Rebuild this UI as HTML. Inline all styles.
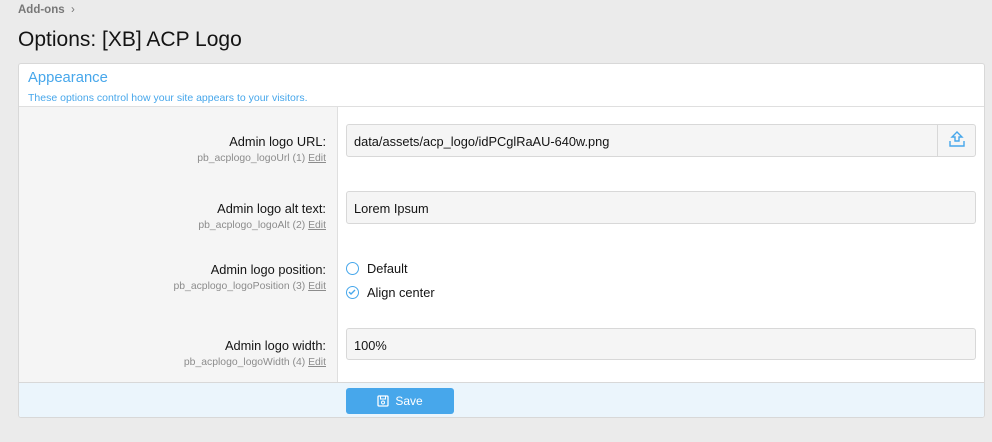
<!DOCTYPE html><html><head><style>
*{box-sizing:border-box}body{margin:0;width:992px;height:442px;background:#ebebeb;font-family:"Liberation Sans",sans-serif;color:#141414;position:relative;overflow:hidden}
.a{position:absolute}
.crumb{left:18px;top:4px;font-size:11.5px;font-weight:bold;color:#777}
h1{position:absolute;left:18px;top:28px;margin:0;font-weight:normal;font-size:21px;color:#141414}
.blk{left:18px;top:63px;width:967px;height:355px;background:#fff;border:1px solid #d8d8d8;border-radius:3px;overflow:hidden}
.hd{position:absolute;left:0;top:0;width:100%;height:43px;border-bottom:1px solid #dfdfdf}
.hd .t{position:absolute;left:9px;top:6px;font-size:14.8px;color:#47a7eb}
.hd .s{position:absolute;left:9px;top:28px;font-size:10.5px;color:#47a7eb}
.lc{position:absolute;left:0;top:43px;width:319px;height:276px;background:#f5f5f5;border-right:1px solid #dfdfdf}
.ft{position:absolute;left:0;top:318px;width:100%;height:37px;background:#ebf5fc;border-top:1px solid #d8d8d8}
.lb{position:absolute;right:658px;text-align:right;font-size:12.8px;white-space:nowrap}
.hint{display:block;font-size:10.4px;color:#8c8c8c;margin-top:4px}
.hint u{color:#8c8c8c}
.in{position:absolute;left:327px;width:630px;height:33px;background:#f5f5f5;border:1px solid #d8d8d8;border-radius:3px;font-size:12.8px;padding:9px 7px}
.rad{position:absolute;left:327px;font-size:12.8px}
.rad i{display:inline-block;width:13px;height:13px;border:1.5px solid #47a7eb;border-radius:50%;vertical-align:-2px;margin-right:8px;position:relative}
.btn{position:absolute;left:327px;top:5px;width:108px;height:26px;background:#47a7eb;border-radius:3px;color:#fff;font-size:12px;text-align:center;line-height:26px}
</style></head><body>
<div class="a crumb">Add-ons &nbsp;<span style="font-weight:normal">›</span></div>
<h1>Options: [XB] ACP Logo</h1>
<div class="a blk">
<div class="hd"><div class="t">Appearance</div><div class="s">These options control how your site appears to your visitors.</div></div>
<div class="lc"></div>
<div class="lb" style="top:70px">Admin logo URL:<span class="hint">pb_acplogo_logoUrl (1) <u>Edit</u></span></div>
<div class="in" style="top:60px">data/assets/acp_logo/idPCglRaAU-640w.png</div>
<div class="a" style="left:918px;top:60px;width:39px;height:33px;border-left:1px solid #d8d8d8"><svg width="39" height="33"><path d="M19 8l-5 5h3v4h4v-4h3z M12 17v5h14v-5" fill="none" stroke="#47a7eb" stroke-width="1.4"/></svg></div>
<div class="lb" style="top:137px">Admin logo alt text:<span class="hint">pb_acplogo_logoAlt (2) <u>Edit</u></span></div>
<div class="in" style="top:127px">Lorem Ipsum</div>
<div class="lb" style="top:198px">Admin logo position:<span class="hint">pb_acplogo_logoPosition (3) <u>Edit</u></span></div>
<div class="rad" style="top:197px"><i></i>Default</div>
<div class="rad" style="top:221px"><i><svg width="10" height="10" style="position:absolute;left:0;top:0"><path d="M2 5l2 2 4-4" fill="none" stroke="#47a7eb" stroke-width="1.4"/></svg></i>Align center</div>
<div class="lb" style="top:274px">Admin logo width:<span class="hint">pb_acplogo_logoWidth (4) <u>Edit</u></span></div>
<div class="in" style="top:264px;height:32px">100%</div>
<div class="ft"><div class="btn"><svg width="12" height="12" style="vertical-align:-2px;margin-right:6px"><rect x="1" y="1" width="10" height="10" rx="1" fill="none" stroke="#fff" stroke-width="1.3"/><rect x="3.5" y="1" width="5" height="3" fill="none" stroke="#fff"/><circle cx="6" cy="7.5" r="1.5" fill="none" stroke="#fff"/></svg>Save</div></div>
</div>
</body></html>
